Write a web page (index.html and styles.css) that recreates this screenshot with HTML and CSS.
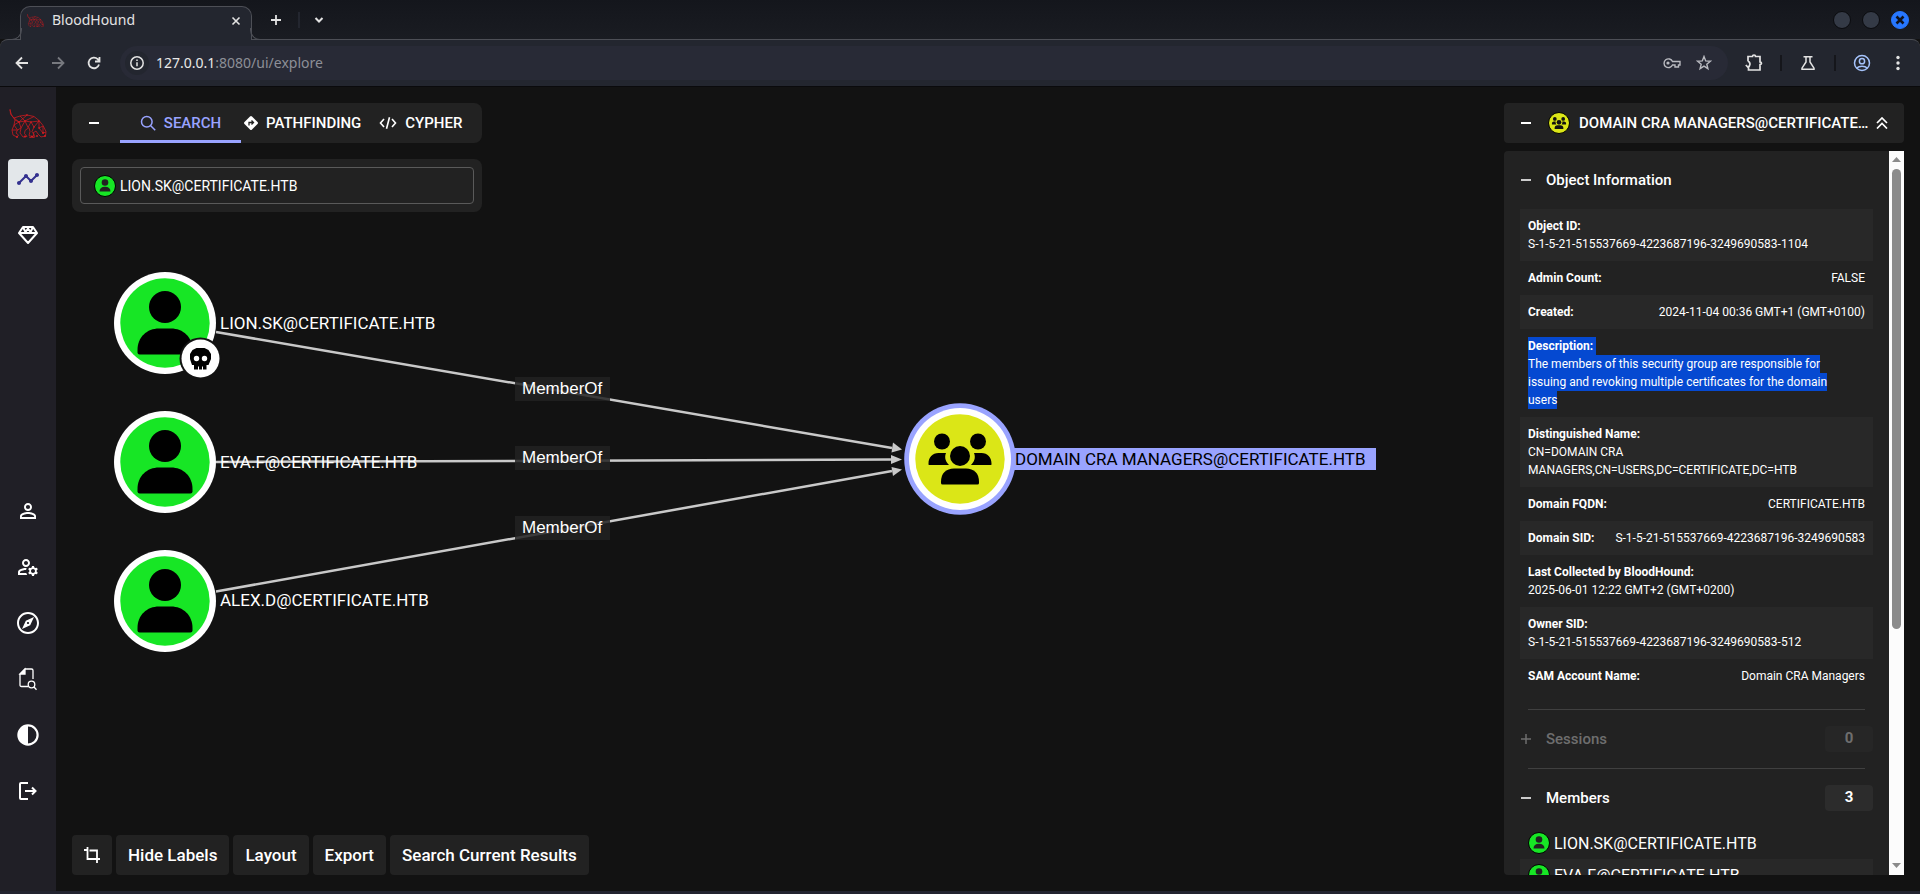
FILE: index.html
```html
<!DOCTYPE html>
<html lang="en">
<head>
<meta charset="utf-8">
<title>BloodHound</title>
<link rel="stylesheet" href="styles.css">
</head>
<body>
<svg class="defs" aria-hidden="true">
  <symbol id="hound" viewBox="0 0 38 29">
    <path fill="none" stroke="#c81a20" stroke-width="0.8" stroke-linejoin="round" d="M1 0l.5 5L5 9l6-2 7-1 7 1.500 5 4 4 5 3 6-.5 4.500-4.500 1-3-3-2-3-3 2 2 4-3 1-3-1M1 1l1.500 5L6 11l-1 5-2 5 1 5 4 2 1.500-2L7 24l1.500-3L12 19l-1 5 3 4 4-.5-2.500-3 .5-3 4-3 1 4-1 4 4 1.500 1-3-2-2.500L25 18M5 9l5 4 8-7M11 7l5 5 9-4.500M6 11l4 2 6-1 6 1 8-1M22 13l3 5 5-6 0 7 4-2M5 16l5-3 2 6 4-7 3 6.500 3-5.500M3 21l5.500 0L5 16M30 19l4 5 0-7M34 24l3-1"/>
    <g fill="#dc1e22"><circle cx="10" cy="13" r=".8"/><circle cx="16" cy="12" r=".8"/><circle cx="22" cy="13" r=".8"/><circle cx="30" cy="12" r=".8"/><circle cx="25" cy="18" r=".8"/><circle cx="30" cy="19" r=".8"/><circle cx="34" cy="24" r=".9"/><circle cx="36" cy="27" r=".9"/><circle cx="8" cy="28" r=".9"/><circle cx="16" cy="27.500" r=".9"/><circle cx="23" cy="27.500" r=".9"/><circle cx="28" cy="27" r=".9"/><circle cx="18" cy="6" r=".8"/></g>
  </symbol>
  <symbol id="user-badge" viewBox="0 0 22 22">
    <circle cx="11" cy="11" r="10.500" fill="#17e625" stroke="#000"/>
    <circle cx="11" cy="7.500" r="3.300" fill="#222"/><path d="M5.500 16.500c0-3 2-4.700 5.500-4.700s5.500 1.700 5.500 4.700z" fill="#222"/>
  </symbol>
  <symbol id="people" viewBox="-32 -28 64 56">
    <circle cx="-18" cy="-17.500" r="8"/><circle cx="18" cy="-17.500" r="8"/>
    <path d="M-31.500 5.500v-1c0-6 4-10.500 10-10.500h7.500c-2 5 0 9 3 12h-19q-1.500 0-1.500-.5zM31.500 5.500v-1c0-6-4-10.500-10-10.500h-7.500c2 5 0 9-3 12h19q1.500 0 1.500-.5z"/>
    <circle cx="0" cy="-3" r="10"/>
    <path d="M-19 24v-1.500c0-8 5-13 13-13h12c8 0 13 5 13 13V24q0 1.500-1.500 1.500h-35q-1.500 0-1.500-1.500z"/>
  </symbol>
  <symbol id="minus" viewBox="0 0 12 12"><path d="M1 6h10" stroke="currentColor" stroke-width="2"/></symbol>
  <symbol id="plus" viewBox="0 0 12 12"><path d="M1 6h10M6 1v10" stroke="currentColor" stroke-width="1.500"/></symbol>
</svg>

<header class="browser">
  <div class="tabstrip">
    <div class="tab">
      <svg class="favicon"><use href="#hound"/></svg>
      <span class="tab-title">BloodHound</span>
      <button class="chrome-btn tab-close" aria-label="Close tab"><svg width="10" height="10" viewBox="0 0 10 10"><path d="M1.500 1.500l7 7m0-7l-7 7" stroke="currentColor" stroke-width="1.600"/></svg></button>
    </div>
    <button class="chrome-btn new-tab" aria-label="New tab"><svg width="12" height="12" viewBox="0 0 12 12"><path d="M1 6h10M6 1v10" stroke="currentColor" stroke-width="1.800"/></svg></button>
    <span class="strip-sep"></span>
    <button class="chrome-btn tab-list" aria-label="Search tabs"><svg width="10" height="8" viewBox="0 0 10 8" fill="none"><path d="M1.500 2L5 5.500 8.500 2" stroke="currentColor" stroke-width="2"/></svg></button>
    <div class="window-controls">
      <button class="win" aria-label="Minimize"></button>
      <button class="win" aria-label="Maximize"></button>
      <button class="win win-close" aria-label="Close"><svg width="10" height="10" viewBox="0 0 10 10"><path d="M1.500 1.500l7 7m0-7l-7 7" stroke="#10131c" stroke-width="2.600"/></svg></button>
    </div>
  </div>
  <div class="toolbar">
    <button class="chrome-btn tool" aria-label="Back"><svg width="14" height="14" viewBox="0 0 14 14" fill="none"><path d="M13 7H2M7 1.500L1.500 7 7 12.500" stroke="currentColor" stroke-width="1.800"/></svg></button>
    <button class="chrome-btn tool dim" aria-label="Forward"><svg width="14" height="14" viewBox="0 0 14 14" fill="none"><path d="M1 7h11M7 1.500L12.500 7 7 12.500" stroke="currentColor" stroke-width="1.800"/></svg></button>
    <button class="chrome-btn tool" aria-label="Reload"><svg width="14" height="14" viewBox="0 0 14 14" fill="none"><path d="M12 8.500A5.300 5.300 0 1 1 10.700 3.200L12 4.500M12.500 1v4.500H8" stroke="currentColor" stroke-width="1.800"/></svg></button>
    <div class="omnibox">
      <span class="site-info"><svg width="14" height="14" viewBox="0 0 14 14" fill="none" stroke="currentColor" stroke-width="1.500"><circle cx="7" cy="7" r="6.200"/><path d="M7 6.300v4M7 3.600v1.500"/></svg></span>
      <span class="url"><b>127.0.0.1</b>:8080/ui/explore</span>
      <svg class="omni-icon" width="18" height="12" viewBox="0 0 18 12" fill="none" stroke="currentColor" stroke-width="1.400"><path d="M9.500 4.500A4.400 4.400 0 1 0 9.500 8H12v2h3.500V8H17V4.500z"/><circle cx="5" cy="6" r="1.600" fill="currentColor" stroke="none"/></svg>
      <svg class="omni-icon" width="16" height="16" viewBox="0 0 16 16" fill="none" stroke="currentColor" stroke-width="1.400"><path d="M8 1.500l1.700 4.400 4.700.3-3.600 3 1.100 4.500L8 11.200l-3.900 2.500 1.100-4.500-3.600-3 4.700-.3z"/></svg>
    </div>
    <button class="chrome-btn ext" aria-label="Extensions"><svg width="18" height="18" viewBox="0 0 18 18" fill="none" stroke="currentColor" stroke-width="1.700"><path d="M3 7V2.500h4.500c0-2 3-2 3 0H15V8c2 0 2 2.500 0 2.500V16H3.500v-3M.8 11l2 2c2.500-.5 3.200-4.500 0-6"/></svg></button>
    <span class="tool-sep"></span>
    <button class="chrome-btn flask" aria-label="Labs"><svg width="16" height="16" viewBox="0 0 16 16" fill="none" stroke="currentColor" stroke-width="1.500"><path d="M3.500 1.700h9M6 2v5L2 13.200v1h12v-1L10 7V2"/></svg></button>
    <span class="tool-sep"></span>
    <button class="chrome-btn profile" aria-label="Profile"><svg width="18" height="18" viewBox="0 0 18 18" fill="none" stroke="currentColor" stroke-width="1.500"><circle cx="9" cy="9" r="7.500"/><circle cx="9" cy="7.200" r="2.600"/><path d="M3.700 14c2.500-2.300 8.100-2.300 10.600 0"/></svg></button>
    <button class="chrome-btn dots" aria-label="Menu"><svg width="4" height="16" viewBox="0 0 4 16" fill="currentColor"><circle cx="2" cy="2.500" r="1.700"/><circle cx="2" cy="8" r="1.700"/><circle cx="2" cy="13.500" r="1.700"/></svg></button>
  </div>
</header>

<div class="app">
  <nav class="rail">
    <a class="rail-item" href="#home" aria-label="BloodHound"><svg width="38" height="29"><use href="#hound"/></svg></a>
    <a class="rail-item active" href="#explore" aria-label="Explore"><svg width="24" height="24" viewBox="0 0 24 24" fill="currentColor"><path d="M23 8c0 1.100-.9 2-2 2-.18 0-.35-.02-.51-.07l-3.560 3.550c.05.160.07.340.07.520 0 1.100-.9 2-2 2s-2-.9-2-2c0-.18.020-.36.070-.52l-2.550-2.550c-.16.050-.34.070-.52.070s-.36-.02-.52-.07l-4.550 4.560c.05.160.07.330.07.510 0 1.100-.9 2-2 2s-2-.9-2-2 .9-2 2-2c.18 0 .35.020.51.070l4.560-4.550C8.020 9.360 8 9.180 8 9c0-1.100.9-2 2-2s2 .9 2 2c0 .18-.02.360-.07.520l2.550 2.550c.16-.05.340-.07.520-.07s.36.020.52.070l3.550-3.560C19.020 8.350 19 8.180 19 8c0-1.100.9-2 2-2s2 .9 2 2z"/></svg></a>
    <a class="rail-item" href="#zones" aria-label="Group management"><svg width="22" height="20" viewBox="0 0 22 20" fill="none" stroke="currentColor" stroke-width="2" stroke-linejoin="round"><path d="M6 2h10l4 6-9 10L2 8zM2 8h18M6 2l2.500 5L11 3.500 13.500 7 16 2"/></svg></a>
    <span class="rail-space"></span>
    <a class="rail-item" href="#profile" aria-label="Profile"><svg width="24" height="24" viewBox="0 0 24 24" fill="currentColor"><path d="M12 5.900a2.100 2.100 0 1 1 0 4.200 2.100 2.100 0 0 1 0-4.200m0 9c2.970 0 6.100 1.460 6.100 2.100v1.100H5.900V17c0-.64 3.130-2.100 6.100-2.100M12 4C9.790 4 8 5.790 8 8s1.790 4 4 4 4-1.790 4-4-1.790-4-4-4zm0 9c-2.670 0-8 1.340-8 4v3h16v-3c0-2.660-5.330-4-8-4z"/></svg></a>
    <a class="rail-item" href="#admin" aria-label="Administration"><svg width="24" height="24" viewBox="0 0 24 24" fill="currentColor"><path d="M4 18v-.65c0-.34.160-.66.410-.81C6.100 15.530 8.030 15 10 15c.03 0 .05 0 .08.010.1-.7.300-1.370.590-1.980-.22-.02-.44-.03-.67-.03-2.420 0-4.680.67-6.610 1.820-.88.520-1.390 1.500-1.390 2.530V20h9.260c-.42-.6-.75-1.280-.97-2H4zM10 12c2.210 0 4-1.790 4-4s-1.790-4-4-4-4 1.790-4 4 1.790 4 4 4zm0-6c1.100 0 2 .9 2 2s-.9 2-2 2-2-.9-2-2 .9-2 2-2zM20.750 16c0-.22-.03-.42-.06-.63l1.140-1.010-1-1.730-1.450.490c-.32-.27-.68-.48-1.080-.63L18 11h-2l-.3 1.490c-.4.150-.76.360-1.080.63l-1.450-.49-1 1.730 1.140 1.010c-.03.210-.06.410-.06.630s.03.420.06.630l-1.140 1.010 1 1.730 1.450-.49c.32.270.68.480 1.080.63L16 21h2l.3-1.490c.4-.15.760-.36 1.080-.63l1.450.49 1-1.730-1.140-1.010c.03-.21.060-.41.060-.63zM17 18c-1.100 0-2-.9-2-2s.9-2 2-2 2 .9 2 2-.9 2-2 2z"/></svg></a>
    <a class="rail-item" href="#docs" aria-label="Docs"><svg width="24" height="24" viewBox="0 0 24 24" fill="currentColor"><path d="M12 10.900c-.61 0-1.100.49-1.100 1.100s.49 1.100 1.100 1.100c.61 0 1.100-.49 1.100-1.100s-.49-1.100-1.100-1.100zM12 1C5.900 1 1 5.900 1 12s4.900 11 11 11 11-4.900 11-11S18.100 1 12 1zm0 20c-5 0-9-4-9-9s4-9 9-9 9 4 9 9-4 9-9 9zm2.190-6.810L6 18l3.810-8.190L18 6l-3.810 8.190z"/></svg></a>
    <a class="rail-item" href="#files" aria-label="API explorer"><svg width="20" height="24" viewBox="0 0 20 24" fill="none" stroke="currentColor" stroke-width="1.300"><path d="M10 19.500H3.500Q2 19.500 2 18V7l5-5h6.500Q15 2 15 3.500V12"/><path d="M7 2v5H2z" fill="currentColor"/><circle cx="13.500" cy="17.500" r="3.300"/><path d="M16 20l2.500 2.800"/></svg></a>
    <a class="rail-item" href="#theme" aria-label="Dark mode"><svg width="24" height="24" viewBox="0 0 24 24"><circle cx="12" cy="12" r="9.600" fill="none" stroke="currentColor" stroke-width="2.200"/><path d="M12 2a10 10 0 0 0 0 20z" fill="currentColor"/></svg></a>
    <a class="rail-item" href="#logout" aria-label="Log out"><svg width="20" height="20" viewBox="0 0 20 20" fill="none" stroke="currentColor" stroke-width="2"><path d="M10 2H3Q2 2 2 3v14q0 1 1 1h7M7 10h10.500M14 6.500l3.500 3.500-3.500 3.500"/></svg></a>
  </nav>

  <main class="stage">
    <svg class="graph" role="img" aria-label="Attack graph">
      <defs>
        <g id="user-node">
          <circle r="51" fill="#fff"/><circle r="44.700" fill="#17e625"/>
          <circle cy="-16" r="16"/><path d="M-27.500 29.500V27C-27.500 14-18 5.500-6 5.500H6c12 0 21.500 8.500 21.500 21.500v2.500q0 2-2 2h-51q-2 0-2-2z"/>
        </g>
      </defs>
      <g transform="translate(-56 -87)">
        <g stroke="#c9c9c9" stroke-width="2.500">
          <path d="M216 332L892 448"/><path d="M216 462L892 459.500"/><path d="M216 591.500L892 471"/>
        </g>
        <g fill="#c9c9c9">
          <path d="M902 449.500l-10.500 3 1.500-10z"/><path d="M902 459.500l-11 4.500v-9z"/><path d="M902 469.500l-9 6.500-1.500-9z"/>
        </g>
        <g fill="#222" fill-opacity=".85">
          <rect x="515" y="377" width="95" height="24"/><rect x="515" y="446" width="95" height="24"/><rect x="515" y="516" width="95" height="24"/>
        </g>
        <g class="edge-label">
          <text x="522" y="394">MemberOf</text><text x="522" y="463">MemberOf</text><text x="522" y="533">MemberOf</text>
        </g>
        <use href="#user-node" x="165" y="323"/>
        <use href="#user-node" x="165" y="462"/>
        <use href="#user-node" x="165" y="601"/>
        <g transform="translate(200.500 358.500)">
          <circle r="21" fill="#121212"/><circle r="19" fill="#fff"/>
          <path d="M-4-10.500h8l4 2 2.500 4v5L8 6.500H6V11H-6.500V6.500H-8.500l-2-6v-5l2.500-4z"/>
          <circle cx="-4" cy="0" r="2.700" fill="#fff"/><circle cx="4" cy="0" r="2.700" fill="#fff"/>
          <path d="M-2 8v3.500M2 8v3.500" stroke="#fff"/>
        </g>
        <rect x="1000" y="448" width="376" height="22" fill="#99a3ff"/>
        <circle cx="960" cy="459" r="55.800" fill="#99a3ff"/><circle cx="960" cy="459" r="51" fill="#fff"/><circle cx="960" cy="459" r="44.700" fill="#dbe617"/>
        <svg x="928" y="431" width="64" height="56"><use href="#people"/></svg>
        <g class="node-label">
          <text x="220" y="329">LION.SK@CERTIFICATE.HTB</text>
          <text x="220" y="468">EVA.F@CERTIFICATE.HTB</text>
          <text x="220" y="606">ALEX.D@CERTIFICATE.HTB</text>
          <text class="selected" x="1015" y="465">DOMAIN CRA MANAGERS@CERTIFICATE.HTB</text>
        </g>
      </g>
    </svg>

    <div class="left-col">
      <section class="panel tabs-panel">
        <button class="icon-btn" aria-label="Collapse search"><svg width="12" height="12"><use href="#minus"/></svg></button>
        <div class="tabs" role="tablist">
          <button class="mode selected" role="tab" aria-selected="true"><svg width="16" height="16" viewBox="0 0 16 16" fill="none" stroke="currentColor" stroke-width="1.500"><circle cx="6.800" cy="6.800" r="5.300"/><path d="M10.700 10.700l4.500 4.500"/></svg>SEARCH</button>
          <button class="mode" role="tab"><svg width="14" height="14" viewBox="0 0 14 14"><path d="M6 .5q1-1 2 0L13.500 6q1 1 0 2L8 13.500q-1 1-2 0L.5 8q-1-1 0-2z" fill="currentColor"/><path d="M5 9.500V6.500h4M7.500 4.500l2 2-2 2" fill="none" stroke="#222" stroke-width="1.300"/></svg>PATHFINDING</button>
          <button class="mode" role="tab"><svg width="18" height="14" viewBox="0 0 18 14" fill="none" stroke="currentColor" stroke-width="1.600"><path d="M5 3L1.500 7 5 11M13 3l3.500 4-3.500 4M10.500 1.200l-3 11.600"/></svg>CYPHER</button>
        </div>
      </section>
      <section class="panel search-panel">
        <label class="search-box"><svg width="22" height="22"><use href="#user-badge"/></svg><input type="text" aria-label="Search nodes" value="LION.SK@CERTIFICATE.HTB"></label>
      </section>
      <div class="actions">
        <button class="action square" aria-label="Reset view"><svg width="16" height="16" viewBox="0 0 16 16" fill="none" stroke="currentColor" stroke-width="1.800"><path d="M0 3h3M3.500 0v12H16M5.500 3.500H13V16"/></svg></button>
        <button class="action">Hide Labels</button>
        <button class="action">Layout</button>
        <button class="action">Export</button>
        <button class="action">Search Current Results</button>
      </div>
    </div>

    <aside class="right-col">
      <section class="panel entity-head">
        <button class="icon-btn small" aria-label="Collapse panel"><svg width="12" height="12"><use href="#minus"/></svg></button>
        <svg class="entity-icon" width="22" height="22" viewBox="0 0 22 22"><circle cx="11" cy="11" r="10.500" fill="#dbe617" stroke="#000"/><svg x="3.500" y="4.500" width="15" height="13"><use href="#people" fill="#111"/></svg></svg>
        <h1>DOMAIN CRA MANAGERS@CERTIFICATE…</h1>
        <button class="icon-btn small" aria-label="Collapse all"><svg width="12" height="12" viewBox="0 0 12 12" fill="none" stroke="currentColor" stroke-width="1.700"><path d="M1 6l5-5 5 5M1 11.500l5-5 5 5"/></svg></button>
      </section>
      <section class="panel entity-body">
        <div class="scroll-area">
          <button class="section-head"><svg width="12" height="12"><use href="#minus"/></svg>Object Information</button>
          <dl class="fields">
            <div class="wide"><dt>Object ID:</dt><dd>S-1-5-21-515537669-4223687196-3249690583-1104</dd></div>
            <div><dt>Admin Count:</dt><dd>FALSE</dd></div>
            <div><dt>Created:</dt><dd>2024-11-04 00:36 GMT+1 (GMT+0100)</dd></div>
            <div class="wide"><dt><mark>Description:&nbsp;</mark></dt><dd><mark>The members of this security group are responsible for issuing and revoking multiple certificates for the domain users</mark></dd></div>
            <div class="wide"><dt>Distinguished Name:</dt><dd>CN=DOMAIN CRA MANAGERS,CN=USERS,DC=CERTIFICATE,DC=HTB</dd></div>
            <div><dt>Domain FQDN:</dt><dd>CERTIFICATE.HTB</dd></div>
            <div><dt>Domain SID:</dt><dd>S-1-5-21-515537669-4223687196-3249690583</dd></div>
            <div class="wide"><dt>Last Collected by BloodHound:</dt><dd>2025-06-01 12:22 GMT+2 (GMT+0200)</dd></div>
            <div class="wide"><dt>Owner SID:</dt><dd>S-1-5-21-515537669-4223687196-3249690583-512</dd></div>
            <div><dt>SAM Account Name:</dt><dd>Domain CRA Managers</dd></div>
          </dl>
          <hr>
          <button class="section-head disabled" disabled><svg width="12" height="12"><use href="#plus"/></svg>Sessions<span class="count">0</span></button>
          <hr>
          <button class="section-head"><svg width="12" height="12"><use href="#minus"/></svg>Members<span class="count">3</span></button>
          <ul class="members">
            <li><svg width="22" height="22"><use href="#user-badge"/></svg>LION.SK@CERTIFICATE.HTB</li>
            <li><svg width="22" height="22"><use href="#user-badge"/></svg>EVA.F@CERTIFICATE.HTB</li>
          </ul>
        </div>
        <div class="scrollbar">
          <svg width="9" height="5" viewBox="0 0 9 5"><path d="M0 5L4.500 0 9 5z" fill="#8b8b8b"/></svg>
          <div class="track"><div class="thumb"></div></div>
          <svg width="9" height="5" viewBox="0 0 9 5"><path d="M0 0l4.500 5L9 0z" fill="#8b8b8b"/></svg>
        </div>
      </section>
    </aside>
  </main>
</div>
<footer class="desktop-edge"></footer>
</body>
</html>
```
FILE: styles.css
```css
* { box-sizing: border-box; }
body {
  margin: 0;
  height: 100vh;
  display: flex;
  flex-direction: column;
  overflow: hidden;
  background: #121212;
  color: #fff;
  font-family: Roboto, "Liberation Sans", sans-serif;
}
button { margin: 0; padding: 0; border: 0; background: none; color: inherit; font: inherit; }
svg { display: block; flex: none; }
.defs { position: absolute; width: 0; height: 0; }

/* browser frame */
.browser { flex: none; font-family: "Noto Sans", sans-serif; color: #e3e3e3; }
.tabstrip {
  height: 39px;
  display: flex;
  align-items: center;
  padding: 0 11px 0 20px;
  background: linear-gradient(#14161c, #1a1c22);
}
.tab {
  position: relative;
  z-index: 1;
  align-self: flex-end;
  width: 232px;
  height: 34px;
  margin-bottom: -1px;
  padding: 0 10px 6px 6px;
  display: flex;
  align-items: center;
  gap: 8px;
  background: #23262f;
  border: 1px solid #4d4f56;
  border-bottom: 0;
  border-radius: 10px 10px 0 0;
}
.tab::before, .tab::after {
  content: "";
  position: absolute;
  bottom: 0;
  width: 11px;
  height: 11px;
  border: 1px solid #4d4f56;
  border-top: 0;
}
.tab::before { left: -11px; border-left: 0; border-bottom-right-radius: 10px; }
.tab::after { right: -11px; border-right: 0; border-bottom-left-radius: 10px; }
.favicon { width: 17px; height: 13px; }
.tab-title { flex: 1; padding-bottom: 2px; font-size: 14px; line-height: 18px; }
.chrome-btn { display: flex; align-items: center; justify-content: center; flex: none; }
.tab-close { width: 10px; }
.new-tab { width: 44px; margin-left: 2px; }
.strip-sep { width: 2px; height: 16px; background: #23262f; margin-right: 14px; }
.window-controls { margin-left: auto; display: flex; gap: 11px; }
.win { width: 18px; height: 18px; border-radius: 50%; background: #343a46; border: 1px solid #0a0b0e; display: flex; align-items: center; justify-content: center; }
.win-close { background: #2777ff; border-color: #2777ff; }
.toolbar {
  height: 48px;
  display: flex;
  align-items: center;
  padding: 0 20px 0 4px;
  background: #23262f;
  border-top: 1px solid #4d4f56;
  border-bottom: 1px solid #0a0a0c;
  border-radius: 8px 8px 0 0;
}
.tool { width: 36px; }
.dim { color: #77797f; }
.omnibox {
  flex: 1;
  height: 34px;
  margin-left: 8px;
  padding: 0 16px 0 5px;
  display: flex;
  align-items: center;
  gap: 15px;
  border-radius: 17px;
  background: #282a36;
}
.site-info { width: 24px; height: 24px; border-radius: 50%; background: #23262f; display: flex; align-items: center; justify-content: center; }
.url { flex: 1; margin-left: -8px; font-size: 14px; line-height: 20px; color: #8d8f97; }
.url b { font-weight: 400; color: #e8e8e8; }
.omni-icon { color: #b9bac0; }
.ext { width: 18px; margin: 0 17px; }
.tool-sep { width: 2px; height: 16px; background: #15161b; }
.flask { width: 52px; }
.profile { width: 52px; color: #a5c3fb; }
.dots { width: 4px; margin-left: 8px; }

/* application */
.app { flex: 1; min-height: 0; display: flex; }
.rail {
  flex: none;
  width: 56px;
  padding: 16px 8px 80px;
  display: flex;
  flex-direction: column;
  align-items: center;
  gap: 16px;
  background: #201f26;
}
.rail-item { width: 40px; height: 40px; display: flex; align-items: center; justify-content: center; color: #fff; border-radius: 4px; }
.rail-item.active { background: #e3e7ea; color: #33318f; }
.rail-space { flex: 1; }
.stage { position: relative; flex: 1; min-width: 0; padding: 16px; display: flex; justify-content: space-between; }
.graph { position: absolute; left: 0; top: 0; width: 100%; height: 100%; }
.edge-label { font: 17px "Liberation Sans", Arial, sans-serif; fill: #fff; }
.node-label { font: 17px Roboto, sans-serif; fill: #fff; }
.node-label .selected { fill: #000; }
.panel { background: #222; border-radius: 8px; }
.left-col, .right-col { position: relative; display: flex; flex-direction: column; }
.left-col { align-items: flex-start; gap: 16px; }
.tabs-panel { width: 410px; height: 40px; display: flex; }
.icon-btn { flex: none; width: 44px; display: flex; align-items: center; justify-content: center; }
.tabs { margin-left: 4px; display: flex; font-size: 15px; font-weight: 500; }
.mode { flex: none; display: flex; align-items: center; justify-content: center; gap: 8px; margin-right: 3px; }
.mode + .mode { margin-right: 18px; }
.mode.selected { width: 121px; color: #99a3ff; border-bottom: 3px solid #99a3ff; padding-top: 3px; }
.search-panel { width: 410px; padding: 8px; }
.search-box { height: 37px; padding: 0 13px; display: flex; align-items: center; gap: 4px; border: 1px solid #5a5a5a; border-radius: 4px; }
.search-box input { flex: 1; min-width: 0; padding: 0; border: 0; outline: 0; background: none; color: #fff; font: 14px Roboto, sans-serif; }
.actions { margin-top: auto; display: flex; gap: 4px; }
.action { height: 40px; padding: 0 12px; border-radius: 4px; background: #222; font-size: 17px; font-weight: 500; }
.square { width: 40px; }

/* entity panel */
.right-col { width: 400px; gap: 8px; }
.entity-head { height: 40px; padding: 0 16px; display: flex; align-items: center; border-radius: 4px; }
.entity-icon { margin: 0 9px 0 16px; }
.entity-head h1 { flex: 1; min-width: 0; margin: 0; font-size: 15px; font-weight: 500; white-space: nowrap; }
.icon-btn.small { width: 12px; }
.entity-body { flex: 1; min-height: 0; display: flex; overflow: hidden; border-radius: 4px 0 0 4px; }
.scroll-area { flex: 1; min-width: 0; padding: 0 16px; overflow: hidden; }
.section-head { width: 100%; height: 58px; display: flex; align-items: center; gap: 14px; font-size: 15px; font-weight: 500; }
.section-head svg { color: #ccc; }
.count { margin-left: auto; width: 48px; height: 26px; border-radius: 4px; background: #2c2c2c; line-height: 24px; text-align: center; font-weight: 700; }
.disabled, .section-head.disabled svg { color: #6e6e6e; }
.disabled .count { background: #262626; }
.fields { margin: 0 0 16px; font-size: 12px; line-height: 18px; }
.fields > div { padding: 8px; display: flex; justify-content: space-between; }
.fields > .wide { display: block; padding-right: 20px; }
.fields > div:nth-child(odd) { background: #282828; }
dt { font-weight: 700; }
dd { margin: 0; }
mark { padding: 2px 0; background: #0549d1; color: inherit; -webkit-box-decoration-break: clone; box-decoration-break: clone; }
hr { height: 1px; margin: 0 8px; border: 0; background: #404040; }
.members { list-style: none; margin: 0; padding: 0; font-size: 16px; }
.members li { height: 32px; padding: 0 8px; display: flex; align-items: center; gap: 4px; }
.members li:nth-child(even) { background: #282828; }
.scrollbar { flex: none; width: 15px; padding: 6px 3px 7px; display: flex; flex-direction: column; align-items: center; gap: 7px; background: #fcfcfc; }
.track { flex: 1; width: 9px; }
.thumb { height: 67%; border-radius: 5px; background: #8b8b8b; }
.desktop-edge { flex: none; height: 3px; background: #22232f; }
```
